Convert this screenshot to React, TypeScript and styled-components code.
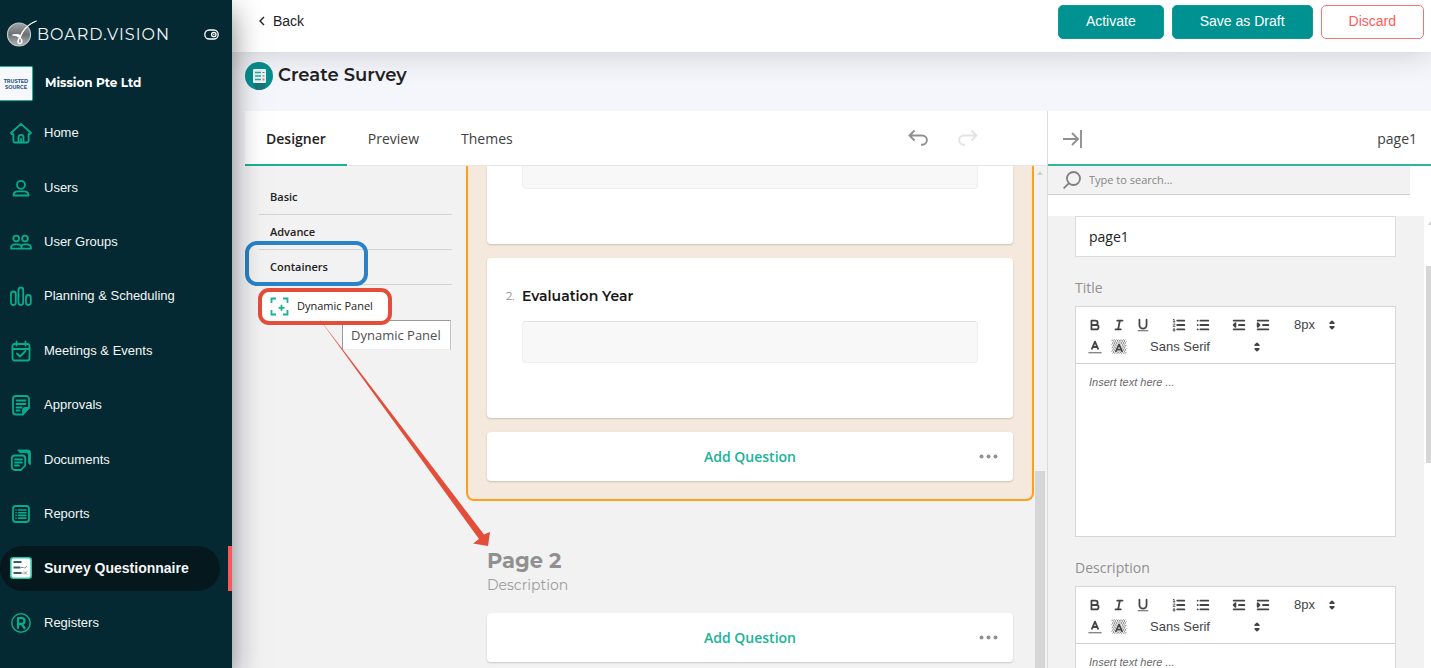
import React from "react";
import styled, { createGlobalStyle } from "styled-components";

const SANS = '"Liberation Sans", Arial, sans-serif';
const OPEN = '"Open Sans", "Noto Sans", sans-serif';
const DISPLAY = 'Montserrat, Inter, sans-serif';

const Global = createGlobalStyle`
  * { box-sizing: border-box; }
  body { margin: 0; font-family: ${OPEN}; color: #222; background: #f5f6fb; }
  button, input, select, textarea { font: inherit; color: inherit; margin: 0; }
  svg { display: block; flex: none; }
`;

const Shell = styled.div`
  display: flex;
  height: 100vh;
  overflow: hidden;
`;

/* ---------- Sidebar ---------- */

const Sidebar = styled.aside`
  position: relative;
  z-index: 5;
  flex: none;
  width: 232px;
  display: flex;
  flex-direction: column;
  background: #052932;
  color: #fff;
  box-shadow: 0 12px 28px rgba(0, 0, 0, 0.5);
`;

const BrandRow = styled.div`
  display: flex;
  align-items: center;
  height: 66px;
  padding: 2px 13px 0 6px;
`;

const BrandName = styled.span`
  flex: 1;
  padding-top: 2px;
  font: 400 16px/20px ${DISPLAY};
  letter-spacing: 1px;
  color: #f2f4f5;
`;

const IconButton = styled.button`
  display: flex;
  padding: 0;
  border: 0;
  background: none;
  color: inherit;
`;

const OrgRow = styled.div`
  display: flex;
  align-items: center;
  gap: 12px;
  height: 35px;
`;

const OrgLogo = styled.div`
  width: 33px;
  height: 35px;
  padding-top: 11px;
  border: 1px solid #0fb59a;
  border-left: 0;
  border-radius: 0 2px 2px 0;
  background: #f6f8fc;
  color: #23507c;
  font: 700 5px/6px ${DISPLAY};
  text-align: center;
`;

const OrgName = styled.span`
  padding-bottom: 2px;
  font: 700 12px/18px ${DISPLAY};
`;

const Nav = styled.nav`
  flex: 1;
  display: flex;
  flex-direction: column;
  padding: 5px 0 18px;
`;

const NavRow = styled.div<{ $active?: boolean }>`
  flex: 1;
  display: flex;
  align-items: center;
  justify-content: space-between;
  &::after {
    content: "";
    width: 4px;
    height: 45px;
    background: ${(p) => (p.$active ? "#ff5757" : "transparent")};
  }
`;

const NavLink = styled.a<{ $active?: boolean }>`
  display: flex;
  align-items: center;
  gap: 12px;
  width: 220px;
  height: 45px;
  padding-left: 10px;
  border-radius: 23px;
  background: ${(p) => (p.$active ? "#04181d" : "transparent")};
  color: #f4f6f7;
  font: ${(p) => (p.$active ? "700 14px" : "400 13px")} / 18px ${SANS};
  text-decoration: none;
  svg { color: #07ab8d; }
`;

/* ---------- Page frame ---------- */

const Main = styled.main`
  flex: 1;
  min-width: 0;
  display: flex;
  flex-direction: column;
`;

const TopBar = styled.header`
  position: relative;
  z-index: 1;
  flex: none;
  display: flex;
  align-items: center;
  justify-content: space-between;
  height: 52px;
  padding: 0 7px 8px 26px;
  background: #fff;
  box-shadow: 0 4px 30px rgba(0, 0, 0, 0.15);
  font: 400 14px/20px ${SANS};
`;

const BackLink = styled.a`
  display: flex;
  align-items: center;
  gap: 7px;
  padding-bottom: 2px;
  color: #222;
  text-decoration: none;
`;

const Actions = styled.div`
  display: flex;
  gap: 8px;
`;

const ActionButton = styled.button<{ $outline?: boolean }>`
  height: 34px;
  padding: 0 27px 2px;
  border: 1px solid ${(p) => (p.$outline ? "#f47474" : "#0e9a96")};
  border-radius: 5px;
  background: ${(p) => (p.$outline ? "#fff" : "#009290")};
  color: ${(p) => (p.$outline ? "#ff5a5a" : "#fff")};
`;

const TitleRow = styled.div`
  flex: none;
  display: flex;
  align-items: center;
  gap: 5px;
  height: 59px;
  padding: 0 13px 11px;
`;

const PageTitle = styled.h1`
  margin: 0;
  padding-bottom: 2px;
  font: 600 18px/24px ${DISPLAY};
`;

const Workspace = styled.div`
  flex: 1;
  min-height: 0;
  display: flex;
  margin-left: 13px;
  background: #f2f2f2;
`;

const Creator = styled.section`
  position: relative;
  z-index: 2;
  flex: 1;
  min-width: 0;
  display: flex;
  flex-direction: column;
`;

const TabBar = styled.div`
  flex: none;
  display: flex;
  height: 55px;
  padding-right: 68px;
  background: #fff;
  border-bottom: 1px solid #e6e6e6;
`;

const Tab = styled.button<{ $active?: boolean }>`
  height: 55px;
  padding: 2px 21px 0;
  border: 0;
  border-bottom: 2px solid ${(p) => (p.$active ? "#19b394" : "transparent")};
  background: none;
  color: ${(p) => (p.$active ? "#222" : "#404040")};
  font: ${(p) => (p.$active ? 600 : 400)} 14px/20px ${OPEN};
`;

const History = styled.div`
  display: flex;
  align-items: center;
  gap: 28px;
  margin-left: auto;
`;

const CreatorBody = styled.div`
  flex: 1;
  min-height: 0;
  display: flex;
`;

/* ---------- Toolbox ---------- */

const Toolbox = styled.div`
  position: relative;
  z-index: 2;
  flex: none;
  width: 221px;
  padding: 14px 14px 0;
`;

const Category = styled.button`
  position: relative;
  display: block;
  width: 100%;
  height: 35px;
  padding: 0 11px;
  border: 0;
  border-bottom: 1px solid #d4d4d4;
  background: none;
  font: 600 11px/16px ${OPEN};
  text-align: left;
`;

const ToolItem = styled.button`
  position: relative;
  display: flex;
  align-items: center;
  gap: 8px;
  width: 132px;
  height: 34px;
  margin-top: 4px;
  padding: 0 11px;
  border: 0;
  border-radius: 10px;
  background: #fff;
  color: #222;
  font: 500 11px/16px ${OPEN};
  white-space: nowrap;
`;

const BlueMark = styled.span`
  position: absolute;
  inset: -9px 84px -2px -14px;
  border: 4px solid #2a82c9;
  border-radius: 12px;
`;

const RedMark = styled.span`
  position: absolute;
  inset: -1px -1px -2px;
  border: 4px solid #e34d3a;
  border-radius: 11px;
`;

const Tooltip = styled.div`
  position: absolute;
  left: 97px;
  top: 154px;
  width: 109px;
  height: 30px;
  padding: 4px 8px;
  border: 1px solid #9a9a9a;
  border-right-color: #c4c4c4;
  border-bottom-color: #ececec;
  background: #fff;
  color: #505050;
  font: 400 13px/20px ${OPEN};
  white-space: nowrap;
`;

const Pointer = styled.svg`
  position: absolute;
  left: 73px;
  top: 150px;
  pointer-events: none;
`;

/* ---------- Design surface ---------- */

const Surface = styled.div`
  flex: 1;
  min-width: 0;
  overflow: hidden;
`;

const SelectedPage = styled.div`
  display: flex;
  flex-direction: column;
  gap: 14px;
  padding: 0 19px 18px;
  border: 2px solid #ff9f1c;
  border-top: 0;
  border-radius: 0 0 8px 8px;
  background: #f5e8dc;
`;

const Card = styled.div<{ $cut?: boolean }>`
  padding: ${(p) => (p.$cut ? 0 : 28)}px 35px 55px;
  border-radius: ${(p) => (p.$cut ? "0 0 4px 4px" : "4px")};
  background: #fff;
  box-shadow: 0 1px 2px rgba(0, 0, 0, 0.18);
`;

const QuestionTitle = styled.label`
  display: flex;
  align-items: center;
  gap: 6px;
  height: 21px;
  margin: 0 0 14px -16px;
  color: #161616;
  font: 600 14px/21px ${DISPLAY};
`;

const QuestionNo = styled.span`
  width: 10px;
  color: #909090;
  font-size: 11px;
  font-weight: 400;
`;

const Field = styled.input<{ $cut?: boolean }>`
  display: block;
  width: 100%;
  height: ${(p) => (p.$cut ? 23 : 42)}px;
  border: 1px solid #efefef;
  border-top: ${(p) => (p.$cut ? 0 : "1px solid #e0e0e0")};
  border-radius: ${(p) => (p.$cut ? "0 0 4px 4px" : "4px")};
  background: #f8f8f8;
`;

const AddCard = styled.div`
  display: grid;
  grid-template-columns: 1fr auto 1fr;
  align-items: center;
  height: 49px;
  padding: 0 15px;
  border-radius: 4px;
  background: #fff;
  box-shadow: 0 1px 2px rgba(0, 0, 0, 0.18);
`;

const AddButton = styled.button`
  grid-column: 2;
  padding: 0;
  border: 0;
  background: none;
  color: #19b394;
  font: 600 14px/20px ${OPEN};
`;

const MoreButton = styled(IconButton)`
  justify-self: end;
  color: #909090;
`;

const NextPage = styled.div`
  padding: 46px 21px 0;
`;

const NextTitle = styled.h2`
  margin: 0;
  color: #909090;
  font: 700 21px/28px ${DISPLAY};
`;

const NextText = styled.p`
  margin: 0 0 18px;
  color: #9c9c9c;
  font: 400 14px/20px ${DISPLAY};
`;

const Scrollbar = styled.div`
  flex: none;
  display: flex;
  flex-direction: column;
  justify-content: space-between;
  width: 13px;
  padding: 5px 2px 0 1px;
`;

const Thumb = styled.div`
  height: 39.7%;
  background: #d6d6d6;
`;

const UpArrow = styled.div`
  width: 0;
  margin-left: 2px;
  border: 3px solid transparent;
  border-top: 0;
  border-bottom: 4px solid #d0d0d0;
`;

/* ---------- Property panel ---------- */

const Panel = styled.aside`
  flex: none;
  width: 384px;
  display: flex;
  flex-direction: column;
  border-left: 1px solid #dcdcdc;
  background: #fff;
`;

const PanelHead = styled.div`
  flex: none;
  display: flex;
  align-items: center;
  justify-content: space-between;
  height: 55px;
  padding: 2px 14px 0 15px;
  border-bottom: 2px solid #2fb79c;
  color: #404040;
  font: 400 14px/20px ${OPEN};
`;

const SearchRow = styled.label`
  flex: none;
  display: flex;
  align-items: center;
  gap: 8px;
  height: 29px;
  margin: 0 21px 21px 0;
  padding-left: 15px;
  border-bottom: 1px solid #cfcfcf;
  background: #f2f2f2;
`;

const SearchInput = styled.input`
  flex: 1;
  padding: 0;
  border: 0;
  background: none;
  font: 500 11px/16px ${OPEN};
  &::placeholder { color: #858585; opacity: 1; }
`;

const PanelBody = styled.div`
  flex: 1;
  min-height: 0;
  display: flex;
`;

const PanelForm = styled.div`
  flex: 1;
  min-width: 0;
  overflow: hidden;
  padding: 0 28px 0 27px;
  background: #f2f2f2;
`;

const PanelScroll = styled.div`
  display: flex;
  flex-direction: column;
  gap: 41px;
  width: 7px;
  padding: 5px 0 0 2px;
`;

const PanelThumb = styled.div`
  height: 44%;
  background: #d6d6d6;
`;

const NameInput = styled.input`
  display: block;
  width: 100%;
  height: 41px;
  padding: 0 13px;
  border: 1px solid #dcdcdc;
  background: #fff;
  font: 400 14px/20px ${OPEN};
`;

const FieldLabel = styled.label`
  display: block;
  margin: 21px 0 8px;
  color: #909090;
  font: 400 14px/20px ${OPEN};
`;

const Editor = styled.div`
  height: 231px;
  display: flex;
  flex-direction: column;
  border: 1px solid #d6d6d6;
  background: #fff;
`;

const Toolbar = styled.div`
  padding: 7px 7px 5px;
  border-bottom: 1px solid #d0d0d0;
`;

const ToolRow = styled.div`
  display: flex;
  gap: 12px;
  height: 22px;
`;

const ToolGroup = styled.div`
  display: flex;
`;

const ToolButton = styled.button`
  display: flex;
  align-items: center;
  justify-content: center;
  width: 24px;
  height: 22px;
  padding: 0;
  border: 0;
  background: none;
  color: #444;
`;

const Picker = styled.div<{ $wide?: boolean }>`
  display: grid;
  align-items: center;
  width: ${(p) => (p.$wide ? 122 : 53)}px;
  color: #444;
  > * { grid-area: 1 / 1; }
  svg { justify-self: end; pointer-events: none; }
`;

const Select = styled.select`
  appearance: none;
  width: 100%;
  height: 22px;
  padding: 0 7px;
  border: 0;
  background: none;
  font: 400 13px/22px ${SANS};
`;

const Text = styled.textarea`
  flex: 1;
  padding: 10px 13px;
  border: 0;
  resize: none;
  background: #fff;
  font: 400 11px/16px ${SANS};
  &::placeholder { color: #6a6a6a; font-style: italic; opacity: 1; }
`;

/* ---------- Icons ---------- */

const Nv = ({ children, w = 1.8 }: { children: React.ReactNode; w?: number }) => (
  <svg width="22" height="22" viewBox="0 0 22 22" fill="none" stroke="currentColor" strokeWidth={w} strokeLinecap="round" strokeLinejoin="round">
    {children}
  </svg>
);

const navItems: { label: string; active?: boolean; icon: React.ReactNode }[] = [
  { label: "Home", icon: <Nv><path d="M1 11 11 1.800 21 11l-1.400 1.200H18.600V19a1.500 1.500 0 0 1-1.500 1.500H4.900A1.500 1.500 0 0 1 3.400 19v-6.800H1.800zM8.500 20.500v-5.200a2.500 2.500 0 0 1 5 0v5.200M11 17v3.500" /></Nv> },
  { label: "Users", icon: <Nv><circle cx="11" cy="7.800" r="4" /><path d="M3.500 18.500c0-3 2-4.200 4.500-4.200h6c2.500 0 4.500 1.200 4.500 4.200z" /></Nv> },
  { label: "User Groups", icon: <Nv><circle cx="6.200" cy="7.500" r="2.900" /><circle cx="15" cy="7.500" r="2.900" /><path d="M1 17.600c0-2.800 1.500-4.200 4-4.200h3c2.500 0 3.700 1.600 3.700 4.200zM11.700 14.500c.8-.8 1.700-1.100 2.800-1.100h2.500c2.500 0 4 1.400 4 4.200h-9" /></Nv> },
  { label: "Planning & Scheduling", icon: <Nv><rect x="1" y="6.500" width="4.800" height="13.500" rx="2.400" /><rect x="8.400" y="2.500" width="4.800" height="17.500" rx="2.400" /><rect x="16" y="10" width="4.800" height="10" rx="2.400" /></Nv> },
  { label: "Meetings & Events", icon: <Nv><rect x="2.500" y="4" width="17" height="16.500" rx="2" /><path d="M2.500 9h17M6.500 1.500v4M15.500 1.500v4M7 13.500l3 3 5.500-5.500" /></Nv> },
  { label: "Approvals", icon: <Nv><path d="M19 13.500V5a3 3 0 0 0-3-3H6a3 3 0 0 0-3 3v12.500a3 3 0 0 0 3 3h6.500M6.500 6.500h9M6.500 10h9M6.500 13.500h5M6.500 16.500h3" /><path d="M19 14h-3.500a2.500 2.500 0 0 0-2.500 2.500v4z" fill="currentColor" /></Nv> },
  { label: "Documents", icon: <Nv><path d="M1.800 9.500a3 3 0 0 1 3-3h7.400a3 3 0 0 1 3 3v7l-4.200 4.500H4.800a3 3 0 0 1-3-3zM5 10.500h7M5 13.500h7M5 16.500h4" /><path d="M8 1h10a2.500 2.500 0 0 1 2.500 2.500v12c-1.500 0-2-1-2-2V6c0-1.500-1-2.500-2.500-2.500H10z" fill="currentColor" strokeWidth=".8" /></Nv> },
  { label: "Reports", icon: <Nv><rect x="3" y="3" width="16" height="16" rx="3" /><path d="M8.500 7h7.500M8.500 9.700h7.500M8.500 12.400h7.500M8.500 15.100h7.500M6 7h.1M6 9.700h.1M6 12.400h.1M6 15.100h.1" strokeWidth="1.600" /></Nv> },
  {
    label: "Survey Questionnaire",
    active: true,
    icon: (
      <svg width="22" height="22" viewBox="0 0 22 22" fill="none">
        <rect x=".8" y=".8" width="20.400" height="20.400" rx="2.500" fill="#fff" stroke="#25c7a6" strokeWidth="1.600" />
        <path d="M3.500 5h8M3.500 10.500h7M3.500 16h8" stroke="#3c5a6c" strokeWidth="2.200" />
        <path d="M11 10.500h2.500M13.500 10l1.200 1.200L17 9M11.500 16h2M14 14.500l3 3M17 14.500l-3 3" stroke="#7f919c" strokeWidth="1" />
      </svg>
    ),
  },
  { label: "Registers", icon: <Nv w={1.5}><circle cx="11" cy="11" r="9.200" /><path d="M8 16V6h3.600a2.900 2.900 0 0 1 0 5.800H8M11.500 11.800 14.500 16" strokeWidth="2.200" /></Nv> },
];

const Q = ({ children }: { children: React.ReactNode }) => (
  <svg width="16" height="16" viewBox="0 0 18 18" fill="none" stroke="currentColor" strokeWidth="2" strokeLinecap="round" strokeLinejoin="round">
    {children}
  </svg>
);

const Carets = () => (
  <Q><path d="M7 11l2 2 2-2zM7 7l2-2 2 2z" fill="currentColor" /></Q>
);

const Dots = () => (
  <svg width="19" height="5" viewBox="0 0 19 5" fill="currentColor">
    <circle cx="2.500" cy="2.500" r="2" /><circle cx="9.500" cy="2.500" r="2" /><circle cx="16.500" cy="2.500" r="2" />
  </svg>
);

const hatch: string[] = [];
for (let y = 1; y < 17; y += 2) {
  for (let x = 1; x < 17; x += 2) {
    hatch.push(`M${x + ((y >> 1) % 2)} ${y + 1}l1-1`);
  }
}

function RichEditor({ id }: { id: string }) {
  return (
    <Editor>
      <Toolbar>
        <ToolRow>
          <ToolGroup>
            <ToolButton aria-label="Bold"><Q><path d="M5 4h4.500a2.500 2.500 0 0 1 0 5H5zM5 9h5.500a2.500 2.500 0 0 1 0 5H5z" /></Q></ToolButton>
            <ToolButton aria-label="Italic"><Q><path d="M7 4h6M5 14h6M8 14l2-10" /></Q></ToolButton>
            <ToolButton aria-label="Underline"><Q><path d="M5 3v6a4 4 0 0 0 8 0V3" /><path d="M3.500 15.500h11" strokeWidth="1" /></Q></ToolButton>
          </ToolGroup>
          <ToolGroup>
            <ToolButton aria-label="Numbered list">
              <Q><path d="M7 4h8M7 9h8M7 14h8" /><path d="M2.500 5.500h2M3.500 5.500v-3l-1 .5M4.500 10.500h-2c0-1 1.900-1.200 1.900-2.200 0-.9-1.400-.9-1.900-.2M2.500 14.600c1.300 0 2-.2 2-.9s-1.300-.8-2-.3M2.500 15.400c.8.500 2 .4 2-.2 0-.5-.4-.6-1-.6" strokeWidth="1" /></Q>
            </ToolButton>
            <ToolButton aria-label="Bullet list"><Q><path d="M6 4h9M6 9h9M6 14h9M3 4h.01M3 9h.01M3 14h.01" /></Q></ToolButton>
          </ToolGroup>
          <ToolGroup>
            <ToolButton aria-label="Outdent"><Q><path d="M3 14h12M3 4h12M9 9h6" /><path d="M5 7v4L3 9z" fill="currentColor" /></Q></ToolButton>
            <ToolButton aria-label="Indent"><Q><path d="M3 14h12M3 4h12M9 9h6" /><path d="M3 7v4l2-2z" fill="currentColor" /></Q></ToolButton>
          </ToolGroup>
          <Picker><Select aria-label="Size"><option>8px</option></Select><Carets /></Picker>
        </ToolRow>
        <ToolRow>
          <ToolGroup>
            <ToolButton aria-label="Text colour"><Q><path d="M5.500 11 9 3l3.500 8M11.600 9H6.400" /><path d="M2 15.500h14" strokeWidth="1" /></Q></ToolButton>
            <ToolButton aria-label="Background colour">
              <Q><path d={hatch.join("")} strokeWidth=".8" /><path d="M5.500 14 9 6l3.500 8M11.600 12H6.400" stroke="#fff" strokeWidth="3" /><path d="M5.500 14 9 6l3.500 8M11.600 12H6.400" /></Q>
            </ToolButton>
          </ToolGroup>
          <Picker $wide><Select aria-label="Font"><option>Sans Serif</option></Select><Carets /></Picker>
        </ToolRow>
      </Toolbar>
      <Text id={id} placeholder="Insert text here ..." />
    </Editor>
  );
}

const AddQuestion = () => (
  <AddCard>
    <AddButton>Add Question</AddButton>
    <MoreButton aria-label="More"><Dots /></MoreButton>
  </AddCard>
);

export default function App() {
  return (
    <Shell>
      <Global />
      <Sidebar>
        <BrandRow>
          <svg width="31" height="28" viewBox="0 0 31 28" fill="none">
            <defs>
              <linearGradient id="ball" x1="0" y1="0" x2="0" y2="1">
                <stop offset="0" stopColor="#a2a5a7" /><stop offset=".5" stopColor="#6d7072" /><stop offset="1" stopColor="#b4b7b9" />
              </linearGradient>
            </defs>
            <circle cx="13" cy="14.500" r="11.500" fill="url(#ball)" stroke="#c3c7c9" strokeWidth="1.200" />
            <path d="M30.500 1C23 4 17 9.500 14.300 18 12 16.500 10 15.300 6.500 15c3.500-1 6.500-.5 8 .5C18 8 23 3.500 30.500 1z" fill="#fff" stroke="#fff" strokeWidth=".9" />
            <path d="M14.500 16.500c-3 3-3.300 7-.8 7s3-3.500.6-5.500" stroke="#fff" strokeWidth="1.600" />
          </svg>
          <BrandName>BOARD.VISION</BrandName>
          <IconButton aria-label="Toggle menu">
            <svg width="15" height="11" viewBox="0 0 15 11" fill="none" stroke="#fff" strokeWidth="1.300">
              <rect x=".8" y="1" width="13.400" height="9" rx="4.500" /><circle cx="9.800" cy="5.500" r="2.200" /><path d="M9.200 5.500h1.200" />
            </svg>
          </IconButton>
        </BrandRow>
        <OrgRow>
          <OrgLogo>TRUSTED<br />SOURCE</OrgLogo>
          <OrgName>Mission Pte Ltd</OrgName>
        </OrgRow>
        <Nav>
          {navItems.map((n) => (
            <NavRow key={n.label} $active={n.active}>
              <NavLink href="#" $active={n.active}>{n.icon}{n.label}</NavLink>
            </NavRow>
          ))}
        </Nav>
      </Sidebar>

      <Main>
        <TopBar>
          <BackLink href="#">
            <svg width="8" height="10" viewBox="0 0 8 10" fill="none" stroke="#222" strokeWidth="1.400"><path d="M6 1 2 5l4 4" /></svg>
            Back
          </BackLink>
          <Actions>
            <ActionButton>Activate</ActionButton>
            <ActionButton>Save as Draft</ActionButton>
            <ActionButton $outline>Discard</ActionButton>
          </Actions>
        </TopBar>

        <TitleRow>
          <svg width="28" height="28" viewBox="0 0 28 28" fill="none">
            <circle cx="14" cy="14" r="14" fill="#07908f" />
            <path d="M9 21h12l-1 5.500a14 14 0 0 1-9.500 1z" fill="#1d7478" />
            <rect x="8" y="7" width="13" height="14" rx="1" fill="#eef6f6" />
            <path d="M10 10.500h6M10 14h6M10 17.500h6" stroke="#2aa6a1" strokeWidth="1.500" />
            <path d="M17.500 10.500h2M17.500 14h2" stroke="#4f7f88" strokeWidth="1" />
            <path d="M17.500 17.500h2" stroke="#f36f6f" strokeWidth="2" />
          </svg>
          <PageTitle>Create Survey</PageTitle>
        </TitleRow>

        <Workspace>
          <Creator>
            <TabBar role="tablist">
              <Tab role="tab" $active aria-selected>Designer</Tab>
              <Tab role="tab">Preview</Tab>
              <Tab role="tab">Themes</Tab>
              <History>
                <IconButton aria-label="Undo">
                  <svg width="22" height="18" viewBox="0 0 22 18" fill="none" stroke="#909090" strokeWidth="1.900"><path d="M7.500 1.500 2.500 6.500l5 5M2.500 6.500h12.800a4.600 4.600 0 0 1 0 9.200h-1.300" /></svg>
                </IconButton>
                <IconButton aria-label="Redo" disabled>
                  <svg width="22" height="18" viewBox="0 0 22 18" fill="none" stroke="#e3e3e3" strokeWidth="1.900"><path d="M14.500 1.500l5 5-5 5M19.500 6.500H6.700a4.600 4.600 0 0 0 0 9.200H8" /></svg>
                </IconButton>
              </History>
            </TabBar>
            <CreatorBody>
              <Toolbox>
                <Category>Basic</Category>
                <Category>Advance</Category>
                <Category>Containers<BlueMark /></Category>
                <Tooltip role="tooltip">Dynamic Panel</Tooltip>
                <ToolItem>
                  <svg width="19" height="19" viewBox="0 0 19 19" fill="none" stroke="#19b394" strokeWidth="1.800">
                    <path d="M1.500 6V1.500H6M13 1.500h4.500V6M17.500 13v4.500H13M6 17.500H1.500V13M11.500 7.800v6M8.500 10.800h6" />
                  </svg>
                  Dynamic Panel
                  <RedMark />
                </ToolItem>
                <Pointer width="175" height="232" viewBox="0 0 175 232" aria-hidden>
                  <path d="M0 1 166 218.500l6-2.500-2 14-15-2.500 6-4.500z" fill="#e34d3a" />
                </Pointer>
              </Toolbox>
              <Surface>
                <SelectedPage>
                  <Card $cut><Field $cut aria-label="Answer 1" /></Card>
                  <Card>
                    <QuestionTitle htmlFor="q2"><QuestionNo>2.</QuestionNo>Evaluation Year</QuestionTitle>
                    <Field id="q2" />
                  </Card>
                  <AddQuestion />
                </SelectedPage>
                <NextPage>
                  <NextTitle>Page 2</NextTitle>
                  <NextText>Description</NextText>
                  <AddQuestion />
                </NextPage>
              </Surface>
              <Scrollbar><UpArrow /><Thumb /></Scrollbar>
            </CreatorBody>
          </Creator>

          <Panel>
            <PanelHead>
              <IconButton aria-label="Collapse panel">
                <svg width="20" height="18" viewBox="0 0 20 18" fill="none" stroke="#909090" strokeWidth="1.900"><path d="M0 9h15M9 3l6 6-6 6M18 0v18" /></svg>
              </IconButton>
              <span>page1</span>
            </PanelHead>
            <SearchRow>
              <svg width="18" height="18" viewBox="0 0 18 18" fill="none" stroke="#808080" strokeWidth="1.800"><circle cx="10.500" cy="7.500" r="6.500" /><path d="M6 12.200.6 17.400" /></svg>
              <SearchInput aria-label="Search" placeholder="Type to search..." />
            </SearchRow>
            <PanelBody>
              <PanelForm>
                <NameInput aria-label="Name" defaultValue="page1" />
                <FieldLabel htmlFor="title">Title</FieldLabel>
                <RichEditor id="title" />
                <FieldLabel htmlFor="description">Description</FieldLabel>
                <RichEditor id="description" />
              </PanelForm>
              <PanelScroll><UpArrow /><PanelThumb /></PanelScroll>
            </PanelBody>
          </Panel>
        </Workspace>
      </Main>
    </Shell>
  );
}
